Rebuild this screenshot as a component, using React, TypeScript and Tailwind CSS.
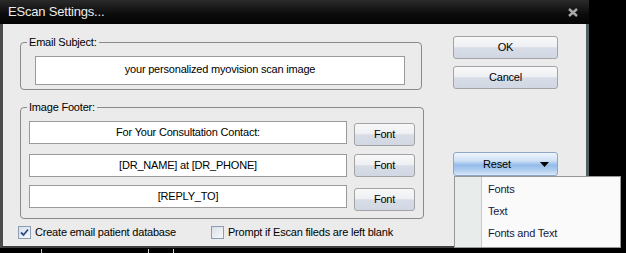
const footerRows = [
  { text: "For Your Consultation Contact:", btnOffset: "mt-[2px]" },
  { text: "[DR_NAME] at [DR_PHONE]", btnOffset: "mt-0" },
  { text: "[REPLY_TO]", btnOffset: "mt-[3px]" },
];

const menuItems = ["Fonts", "Text", "Fonts and Text"];

function SilverButton({ label, className }: { label: string; className: string }) {
  return (
    <button
      className={`${className} flex items-center justify-center rounded-[3px] border border-[#a3a3a3] bg-[linear-gradient(#f8f8fa_0%,#eff0f3_45%,#d7dce6_52%,#d2d8e3_100%)] text-[11px] tracking-[-0.2px] text-black`}
    >
      {label}
    </button>
  );
}

function Checkbox({ checked }: { checked: boolean }) {
  return (
    <span className="flex h-[13px] w-[13px] items-center justify-center border border-[#8c9cb3] bg-[linear-gradient(135deg,#d9dfe8,#f6f8fb)]">
      {checked ? (
        <svg width="9" height="9" viewBox="0 0 9 9">
          <path d="M1 4.5 L3.5 7 L8 1.5" fill="none" stroke="#2b4c8c" strokeWidth="1.8" />
        </svg>
      ) : null}
    </span>
  );
}

export default function App() {
  return (
    <div className="relative h-[253px] w-[626px] overflow-hidden bg-black font-['Liberation_Sans',Arial,sans-serif]">
      <div className="w-[589px]">
        {/* title bar */}
        <div className="flex h-[24px] items-center justify-between bg-[linear-gradient(#2a2a2a,#0b0b0b_60%,#030303)] pl-[8px] pr-[11px]">
          <span className="text-[13px] tracking-[-0.2px] text-[#ececec]">EScan Settings...</span>
          <svg width="10" height="9" viewBox="0 0 10 9">
            <path d="M1 1 L9 8 M9 1 L1 8" stroke="#a9a9a9" strokeWidth="2.4" />
          </svg>
        </div>

        {/* body */}
        <div className="flex h-[224px] border-b-2 border-l-[3px] border-r-[3px] border-b-[#404040] border-l-[#4b4b4b] border-r-[#52605f] bg-[#ebebeb]">
          <div className="pl-[17px] pt-[11px]">
            <fieldset className="h-[55px] w-[402px] rounded-[4px] border border-[#8a8a8a] px-[6px] pb-[4px]">
              <legend className="px-[2px] text-[11px] leading-[14px] tracking-[-0.2px] text-black">Email Subject:</legend>
              <div className="ml-[8px] mt-[7px] flex h-[29px] w-[370px] items-center justify-center border border-[#9a9a9a] bg-white pb-[3px] text-[11px] tracking-[-0.2px] text-black">
                your personalized myovision scan image
              </div>
            </fieldset>

            <fieldset className="mt-[10px] h-[119px] w-[404px] rounded-[4px] border border-[#8a8a8a] px-[6px]">
              <legend className="px-[2px] text-[11px] leading-[14px] tracking-[-0.2px] text-black">Image Footer:</legend>
              <div className="flex flex-col gap-[8px] pt-[7px]">
                {footerRows.map((r) => (
                  <div key={r.text} className="flex items-start">
                    <div className="ml-[2px] flex h-[23px] w-[318px] items-center justify-center border border-[#9a9a9a] bg-white text-[11px] tracking-[-0.2px] text-black">
                      {r.text}
                    </div>
                    <SilverButton label="Font" className={`${r.btnOffset} ml-[7px] h-[23px] w-[61px]`} />
                  </div>
                ))}
              </div>
            </fieldset>

            <div className="mt-[5px] flex items-center text-[11px] tracking-[-0.2px] text-black">
              <div className="-ml-[2px] flex items-center gap-[4px]">
                <Checkbox checked />
                <span>Create email patient database</span>
              </div>
              <div className="ml-[35px] flex items-center gap-[4px]">
                <Checkbox checked={false} />
                <span>Prompt if Escan fileds are left blank</span>
              </div>
            </div>
          </div>

          <div className="ml-[29px] flex flex-col pt-[12px]">
            <SilverButton label="OK" className="h-[23px] w-[105px]" />
            <SilverButton label="Cancel" className="mt-[7px] h-[23px] w-[105px]" />
            <button className="mt-[63px] flex h-[24px] w-[105px] items-center rounded-[3px] border border-[#8ea7c6] bg-[linear-gradient(#eef5fd_0%,#cfe1f6_35%,#93bbe9_55%,#b3cff0_80%,#dae8f8_100%)] pl-[29px] text-[11px] tracking-[-0.2px] text-black">
              <span className="w-[57px] text-left">Reset</span>
              <svg width="9" height="5" viewBox="0 0 9 5">
                <path d="M0 0 H9 L4.5 5 Z" fill="#000" />
              </svg>
            </button>
          </div>
        </div>
      </div>

      {/* bits of the app behind the dialog */}
      <div className="flex h-[5px] items-end">
        <span className="ml-[41px] h-[4px] w-[1px] bg-[#f0c070]" />
        <span className="ml-[106px] h-[4px] w-[1px] bg-[#d8d8d8]" />
        <span className="ml-[24px] h-[4px] w-[1px] bg-[#d8d8d8]" />
      </div>

      {/* dropdown menu */}
      <div className="absolute left-[454px] top-[176px] flex h-[72px] w-[167px] border border-[#979797] bg-[#fafafa]">
        <div className="w-[27px] border-r border-r-[#c6c9c9] bg-[#e8edec]" />
        <div className="flex flex-col pt-[1px]">
          {menuItems.map((m) => (
            <div key={m} className="flex h-[22px] items-center pl-[6px] text-[11px] tracking-[-0.2px] text-[#15193a]">
              {m}
            </div>
          ))}
        </div>
      </div>
    </div>
  );
}
